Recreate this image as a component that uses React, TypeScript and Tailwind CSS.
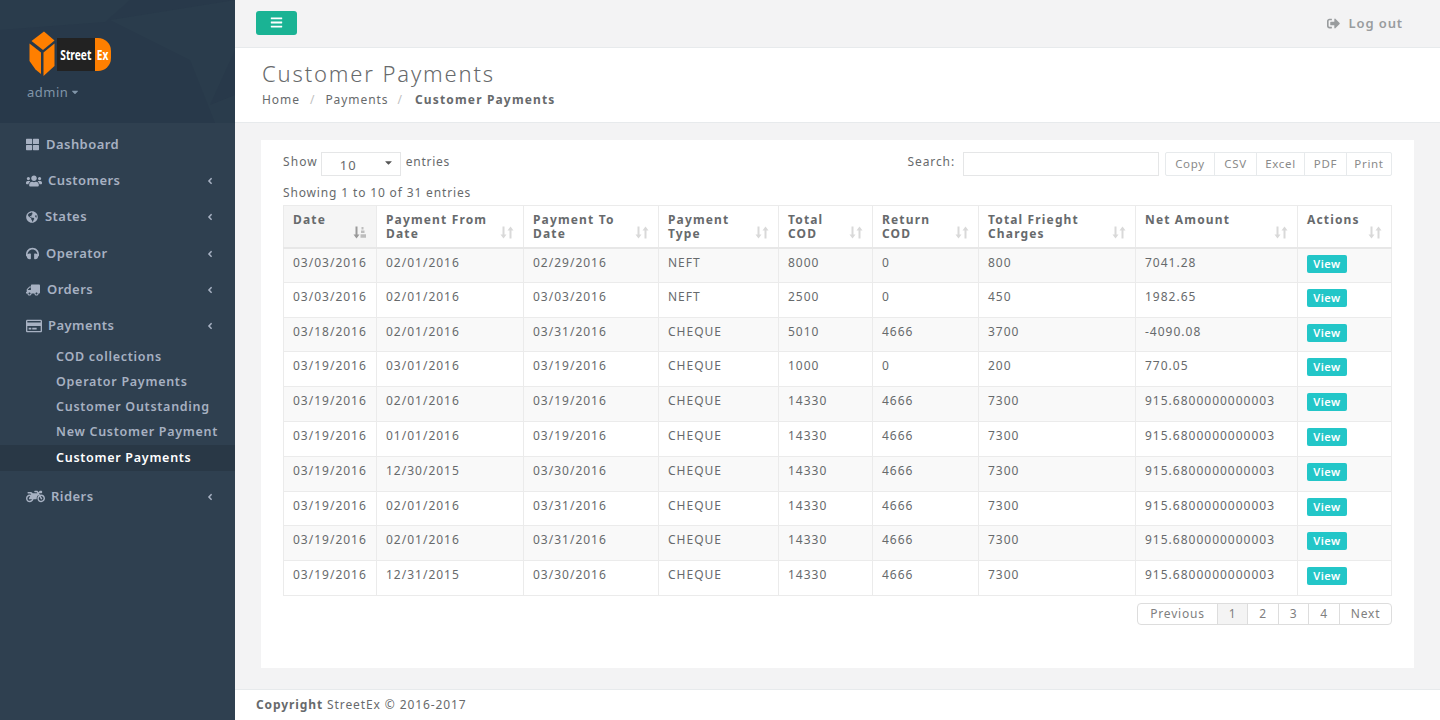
import React from "react";
import { FaThLarge, FaUsers, FaGlobeAmericas, FaTruck, FaRegCreditCard, FaMotorcycle, FaBars, FaAngleLeft, FaCaretDown, FaHeadphones, FaSignOutAlt } from "react-icons/fa";

const rows = [
  ["03/03/2016","02/01/2016","02/29/2016","NEFT","8000","0","800","7041.28"],
  ["03/03/2016","02/01/2016","03/03/2016","NEFT","2500","0","450","1982.65"],
  ["03/18/2016","02/01/2016","03/31/2016","CHEQUE","5010","4666","3700","-4090.08"],
  ["03/19/2016","03/01/2016","03/19/2016","CHEQUE","1000","0","200","770.05"],
  ["03/19/2016","02/01/2016","03/19/2016","CHEQUE","14330","4666","7300","915.6800000000003"],
  ["03/19/2016","01/01/2016","03/19/2016","CHEQUE","14330","4666","7300","915.6800000000003"],
  ["03/19/2016","12/30/2015","03/30/2016","CHEQUE","14330","4666","7300","915.6800000000003"],
  ["03/19/2016","02/01/2016","03/31/2016","CHEQUE","14330","4666","7300","915.6800000000003"],
  ["03/19/2016","02/01/2016","03/31/2016","CHEQUE","14330","4666","7300","915.6800000000003"],
  ["03/19/2016","12/31/2015","03/30/2016","CHEQUE","14330","4666","7300","915.6800000000003"],
];

const cols: [string, string, string, boolean?][] = [
  ["Date", "", "w-[93px]", true],
  ["Payment From", "Date", "w-[147px]"],
  ["Payment To", "Date", "w-[135px]"],
  ["Payment", "Type", "w-[120px]"],
  ["Total", "COD", "w-[94px]"],
  ["Return", "COD", "w-[106px]"],
  ["Total Frieght", "Charges", "w-[157px]"],
  ["Net Amount", "", "w-[162px]"],
  ["Actions", "", "w-[94px]"],
];

function SortIcon({ active }: { active?: boolean }) {
  const c = active ? "#9a9a9a" : "#d9d9d9";
  return (
    <svg viewBox="0 0 14 13" className="absolute right-[9px] bottom-[8px] w-[14px] h-[13px]" fill="none">
      <path d="M3.5 0.5V11" stroke={c} strokeWidth="2" />
      <path d="M0.5 8.5H6.5L3.5 12.5Z" fill={c} />
      {active ? (
        <path d="M8.5 1h2v2.4h-2zM8 4.6h3.5v2.4H8zM7.5 8.2H13v3.6H7.5z" fill="#bdbdbd" />
      ) : (
        <>
          <path d="M10.5 2V12.5" stroke={c} strokeWidth="2" />
          <path d="M7.5 4.5H13.5L10.5 0.5Z" fill={c} />
        </>
      )}
    </svg>
  );
}

function NavItem({ icon, label, gap, arrow = true }: { icon: React.ReactNode; label: string; gap: string; arrow?: boolean }) {
  return (
    <div className="h-[36.3px] pl-[26px] pr-[20px] flex items-center text-[#a7b1c2] font-semibold text-[13px] tracking-[0.45px]">
      <span className={`flex items-center justify-start ${gap}`}>{icon}</span>
      <span className="flex-1">{label}</span>
      {arrow && <FaAngleLeft className="text-[10px]" />}
    </div>
  );
}

function Sub({ label, active }: { label: string; active?: boolean }) {
  return (
    <div className={`h-[25.3px] pl-[56px] flex items-center text-[12.5px] font-semibold tracking-[0.72px] ${active ? "bg-[#293846] text-white" : "text-[#a7b1c2]"}`}>
      {label}
    </div>
  );
}

function Logo() {
  return (
    <div className="flex items-center h-[46px]">
      <svg viewBox="0 0 26 46" className="w-[26px] h-[46px] shrink-0">
        <path d="M15 0.5L25.5 9.5L14 19L2.5 10Z" fill="#ff7f00" />
        <path d="M0.5 12.5L12 21.5V43L6.5 38.5L0.5 30Z" fill="#ff7f00" />
        <path d="M14.5 21.5L25.5 12.5V35L14.5 45Z" fill="#ff7f00" />
      </svg>
      <div className="ml-[2px] h-[33px] w-[38px] bg-[#222222] flex items-center justify-center text-white font-bold text-[15px] tracking-normal font-['Liberation_Sans',sans-serif]">
        <span className="inline-block scale-x-[0.68] whitespace-nowrap">Street</span>
      </div>
      <div className="h-[33px] w-[16px] bg-[#ff7f00] rounded-r-[13px] flex items-center justify-center text-white font-bold text-[15px] tracking-normal font-['Liberation_Sans',sans-serif]">
        <span className="inline-block scale-x-[0.68] whitespace-nowrap">Ex</span>
      </div>
    </div>
  );
}

export default function App() {
  return (
    <div className="flex w-[1440px] h-[720px] overflow-hidden bg-[#f3f3f4] font-['Open_Sans',sans-serif] text-[#676a6c] text-[13px] tracking-[1px]">
      <aside className="w-[235px] shrink-0 bg-[#2f4050] flex flex-col">
        <div className="relative h-[123px] bg-[#28394a] pl-[29px] pt-[31px] overflow-hidden">
          <svg viewBox="0 0 235 123" className="absolute inset-0 w-[235px] h-[123px]">
            <path d="M0 0H130L105 22L0 30Z" fill="#2a3c4c" />
            <path d="M110 20L235 0V50L210 105L235 95V123H215L190 60Z" fill="#2a3c4c" />
          </svg>
          <div className="relative">
            <Logo />
            <div className="mt-[6px] text-[13px] text-[#8095a8] leading-[18px] tracking-[0.5px] flex items-center ml-[-2px]">admin<FaCaretDown className="text-[10px] ml-[2px]" /></div>
          </div>
        </div>
        <nav className="pt-[3.5px]">
          <NavItem icon={<FaThLarge className="text-[13px]" />} label="Dashboard" gap="w-[20px]" arrow={false} />
          <NavItem icon={<FaUsers className="text-[16px]" />} label="Customers" gap="w-[22px]" />
          <NavItem icon={<FaGlobeAmericas className="text-[12px]" />} label="States" gap="w-[19px]" />
          <NavItem icon={<FaHeadphones className="text-[13px]" />} label="Operator" gap="w-[20px]" />
          <NavItem icon={<FaTruck className="text-[14px] -scale-x-100" />} label="Orders" gap="w-[21px]" />
          <NavItem icon={<FaRegCreditCard className="text-[16px]" />} label="Payments" gap="w-[22px]" />
          <div>
            <Sub label="COD collections" />
            <Sub label="Operator Payments" />
            <Sub label="Customer Outstanding" />
            <Sub label="New Customer Payment" />
            <Sub label="Customer Payments" active />
          </div>
          <div className="mt-[8px]">
            <NavItem icon={<FaMotorcycle className="text-[19px]" />} label="Riders" gap="w-[25px]" />
          </div>
        </nav>
      </aside>

      <main className="flex-1 flex flex-col min-w-0">
        <header className="h-[48px] shrink-0 border-b border-[#e7eaec] flex items-center justify-between pl-[21px] pr-[37px]">
          <button className="w-[41px] h-[24px] bg-[#1ab394] rounded-[3px] flex items-center justify-center text-white mt-[-2px]"><FaBars className="text-[13px]" /></button>
          <div className="flex items-center text-[#999c9e] font-semibold text-[13px] tracking-[0.9px]">
            <FaSignOutAlt className="text-[13px] mr-[8px]" />Log out
          </div>
        </header>
        <section className="h-[75px] shrink-0 bg-white pl-[27px] pt-[12px] border-b border-[#e7eaec]">
          <h1 className="text-[22px] font-light leading-[26px] text-[#676a6c] tracking-[1.85px]">Customer Payments</h1>
          <div className="mt-[6px] text-[12px] leading-[16px] flex tracking-[0.95px]">
            <span>Home</span>
            <span className="mx-[10px] text-[#c0c0c0]">/</span>
            <span>Payments</span>
            <span className="mx-[9px] text-[#c0c0c0]">/</span>
            <b className="font-bold ml-[3px] tracking-[1.15px]">Customer Payments</b>
          </div>
        </section>
        <div className="flex-1 px-[26px] pt-[17px] pb-[21px]">
          <div className="h-[528px] bg-white px-[22px] pt-[12px]">
            <div className="flex justify-between h-[24px] text-[12px]">
              <div className="flex items-start">
                <span className="mt-[1px] leading-[18px] tracking-[1.1px]">Show</span>
                <div className="ml-[3px] mr-[3px] w-[80px] h-[24px] border border-[#e5e6e7] flex items-center justify-between pl-[18px] pr-[6px] text-[13px]">
                  <span className="mt-[3px]">10</span><FaCaretDown className="text-[11px] text-[#555] -mt-[3px]" />
                </div>
                <span className="ml-[2px] mt-[1px] leading-[18px] tracking-[0.7px]">entries</span>
              </div>
              <div className="flex items-start">
                <span className="mt-[1px] leading-[18px] tracking-[0.9px]">Search:</span>
                <div className="ml-[8px] mr-[6px] w-[196px] h-[24px] border border-[#e5e6e7]" />
                <div className="flex h-[24px] border border-[#e7eaec] rounded-[2px] text-[11.5px] text-[#8a8a8a] tracking-[0.7px]">
                  {[["Copy","w-[48px]"],["CSV","w-[42px]"],["Excel","w-[48px]"],["PDF","w-[42px]"],["Print","w-[45px]"]].map(([b, w], i) => (
                    <div key={b} className={`${w} flex items-center justify-center ${i ? "border-l border-[#e7eaec]" : ""}`}>{b}</div>
                  ))}
                </div>
              </div>
            </div>
            <div className="mt-[9px] h-[20px] text-[12px] leading-[16px] tracking-[0.85px]">Showing 1 to 10 of 31 entries</div>
            <table className="table-fixed border-collapse w-[1108px] text-[12px] leading-[14px]">
              <thead>
                <tr className="h-[42px]">
                  {cols.map(([a, b, w, active]) => (
                    <th key={a} className={`${w} relative border border-[#ebebeb] border-b-2 border-b-[#e7e7e7] align-top text-left pl-[9px] pr-[10px] pt-[7px] font-bold tracking-[1.15px] ${active ? "bg-[#f5f5f5]" : ""}`}>
                      <span className="block whitespace-nowrap">{a}</span>
                      {b && <span className="block whitespace-nowrap">{b}</span>}
                      <SortIcon active={active} />
                    </th>
                  ))}
                </tr>
              </thead>
              <tbody>
                {rows.map((r, i) => (
                  <tr key={i} className={`h-[34.8px] ${i % 2 === 0 ? "bg-[#f9f9f9]" : "bg-white"}`}>
                    {r.map((v, j) => (
                      <td key={j} className="border border-[#ebebeb] align-top pl-[9px] pt-[7px]">{v}</td>
                    ))}
                    <td className="border border-[#ebebeb] align-top pl-[9px] pt-[6px]">
                      <button className="block w-[40px] h-[18px] rounded-[2px] bg-[#23c6c8] text-white text-[11px] font-semibold leading-[18px] text-center tracking-[0.5px]">View</button>
                    </td>
                  </tr>
                ))}
              </tbody>
            </table>
            <div className="flex justify-end mt-[7px]">
              <div className="flex h-[22px] border border-[#dddddd] rounded-[4px] text-[12px] text-[#808080] tracking-[0.8px] items-stretch overflow-hidden">
                {[["Previous","w-[79px]"],["1","w-[30px] bg-[#f4f4f4]"],["2","w-[31px]"],["3","w-[30px]"],["4","w-[31px]"],["Next","w-[52px]"]].map(([p, w], i) => (
                  <div key={p} className={`${w} flex items-center justify-center ${i ? "border-l border-[#dddddd]" : ""}`}>{p}</div>
                ))}
              </div>
            </div>
          </div>
        </div>
        <footer className="h-[31px] shrink-0 bg-white border-t border-[#e7eaec] pl-[21px] flex items-center text-[12px] tracking-[0.9px]">
          <b className="font-bold mr-[4px]">Copyright</b> StreetEx © 2016-2017
        </footer>
      </main>
    </div>
  );
}
